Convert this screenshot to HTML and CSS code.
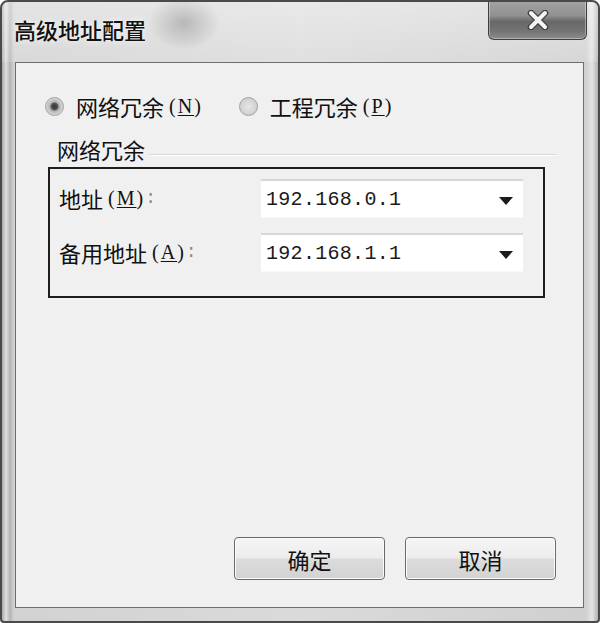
FILE: index.html
```html
<!DOCTYPE html>
<html lang="zh">
<head>
<meta charset="utf-8">
<title>高级地址配置</title>
<link rel="stylesheet" href="styles.css">
</head>
<body>
<div class="window">
  <div class="titlebar">
    <div class="title">高级地址配置</div>
    <div class="close">
      <svg width="24" height="20" viewBox="0 0 24 20">
        <path d="M5 3 L19 17 M19 3 L5 17" stroke="#404040" stroke-width="6.5" stroke-linecap="round"/>
        <path d="M5 3 L19 17 M19 3 L5 17" stroke="#f4f4f4" stroke-width="4" stroke-linecap="round"/>
      </svg>
    </div>
  </div>
  <div class="client">
    <div class="radios">
      <label class="radio"><span class="dot on"></span>网络冗余<span class="key">(<u>N</u>)</span></label>
      <label class="radio"><span class="dot"></span>工程冗余<span class="key">(<u>P</u>)</span></label>
    </div>
    <div class="group-head">
      <span class="group-label">网络冗余</span>
      <span class="group-line"></span>
    </div>
    <div class="group-box">
      <div class="row">
        <span class="field-label">地址<span class="key">(<u>M</u>)</span><span class="colon">:</span></span>
        <div class="combo"><span class="value">192.168.0.1</span><span class="arrow"></span></div>
      </div>
      <div class="row">
        <span class="field-label">备用地址<span class="key">(<u>A</u>)</span><span class="colon">:</span></span>
        <div class="combo"><span class="value">192.168.1.1</span><span class="arrow"></span></div>
      </div>
    </div>
    <div class="spacer"></div>
    <div class="buttons">
      <button class="btn">确定</button>
      <button class="btn">取消</button>
    </div>
  </div>
</div>
</body>
</html>
```

FILE: styles.css
```css
* { box-sizing: border-box; }
html, body {
  margin: 0;
  padding: 0;
  background: #ffffff;
}
body {
  font-family: "Noto Sans CJK SC", "Noto Sans", sans-serif;
  color: #111111;
}
.window {
  width: 600px;
  height: 623px;
  border: 2px solid #4a4a4a;
  border-radius: 8px 8px 4px 4px;
  background:
    radial-gradient(ellipse 36px 28px at 182px 20px, rgba(110,110,110,0.6), rgba(110,110,110,0) 100%),
    linear-gradient(90deg, #a8a8a8 0px, #e0e0e0 4px, #b4b4b4 8px, #d2d2d2 12px, #dadada 50%, #d0d0d0 calc(100% - 12px), #e4e4e4 calc(100% - 6px), #b0b0b0 100%);
  display: flex;
  flex-direction: column;
  overflow: hidden;
}
.titlebar {
  height: 60px;
  display: flex;
  justify-content: space-between;
  align-items: flex-start;
  padding-left: 12px;
  padding-right: 11px;
  background: linear-gradient(180deg, rgba(255,255,255,0.4), rgba(255,255,255,0.15));
}
.title {
  font-size: 22px;
  line-height: 24px;
  margin-top: 15px;
  color: #111111;
  font-weight: 500;
  text-shadow: 0 0 6px rgba(255,255,255,0.9);
}
.close {
  width: 99px;
  height: 40px;
  margin-top: -2px;
  border: 1px solid #3e3e3e;
  border-top: none;
  border-radius: 0 0 6px 6px;
  background: linear-gradient(180deg, #a4a4a4 0%, #909090 40%, #686868 55%, #747474 80%, #8c8c8c 100%);
  box-shadow: inset 0 0 0 1px rgba(255,255,255,0.35);
  display: flex;
  align-items: center;
  justify-content: center;
}
.client {
  margin: 0 14px 0 13px;
  height: 546px;
  border: 1px solid #6e6e6e;
  background: #f0f0f0;
  display: flex;
  flex-direction: column;
  padding: 31px 27px 27px 29px;
}
.radios {
  display: flex;
  align-items: center;
  gap: 36px;
  height: 24px;
}
.radio {
  display: flex;
  align-items: center;
  font-size: 22px;
  line-height: 24px;
  color: #111111;
}
.key {
  font-family: "Liberation Serif", "Noto Sans CJK SC", serif;
  font-size: 20px;
  margin-left: 5px;
  letter-spacing: 2px;
}
.key u { text-decoration-thickness: 1px; text-underline-offset: 2px; }
.dot {
  width: 19px;
  height: 19px;
  border-radius: 50%;
  border: 1px solid #a0a0a0;
  background: radial-gradient(circle, #e6e6e6 0%, #d0d0d0 70%, #f6f6f6 100%);
  margin-right: 12px;
}
.dot.on {
  background: radial-gradient(circle, #333333 0%, #555555 28%, #b0b0b0 38%, #d8d8d8 70%, #f4f4f4 100%);
}
.group-head {
  display: flex;
  align-items: center;
  height: 24px;
  margin-top: 19px;
  padding-left: 12px;
}
.group-label {
  font-size: 22px;
  line-height: 24px;
  color: #111111;
  padding-right: 4px;
}
.group-line {
  flex: 1;
  height: 2px;
  margin-top: 12px;
  border-top: 1px solid #d8d8d8;
  border-bottom: 1px solid #ffffff;
}
.group-box {
  width: 497px;
  height: 131px;
  margin-top: 6px;
  margin-left: 3px;
  border: 2px solid #1e1e1e;
  padding: 10px 0 0 9px;
  display: flex;
  flex-direction: column;
  gap: 16px;
}
.row {
  display: flex;
  align-items: center;
  height: 38px;
}
.field-label {
  width: 202px;
  font-size: 22px;
  line-height: 24px;
  color: #111111;
  display: flex;
  align-items: center;
}
.colon {
  font-family: "Liberation Mono", monospace;
  font-size: 18px;
  color: #888;
  margin-left: 0px;
}
.combo {
  width: 262px;
  height: 38px;
  background: #ffffff;
  border-top: 2px solid #d6d6d6;
  box-shadow: 0 1px 0 #f8f8f8;
  display: flex;
  align-items: center;
  justify-content: space-between;
  padding: 0 10px 0 5px;
}
.value {
  font-family: "Liberation Mono", "DejaVu Sans Mono", monospace;
  font-size: 20px;
  color: #1a1a1a;
  letter-spacing: 0.3px;
}
.arrow {
  width: 0;
  height: 0;
  border-left: 7px solid transparent;
  border-right: 7px solid transparent;
  border-top: 8px solid #1a1a1a;
  margin-top: 3px;
}
.spacer { flex: 1; }
.buttons {
  display: flex;
  justify-content: flex-end;
  gap: 20px;
}
.btn {
  width: 151px;
  height: 43px;
  border: 1px solid #6a6a6a;
  border-radius: 4px;
  background: linear-gradient(180deg, #f6f6f6 0%, #ececec 48%, #dcdcdc 52%, #d2d2d2 100%);
  box-shadow: inset 0 0 0 1px #fbfbfb;
  font-family: "Noto Sans CJK SC", sans-serif;
  font-size: 22px;
  color: #111111;
  padding: 0;
  line-height: 24px;
}
```
